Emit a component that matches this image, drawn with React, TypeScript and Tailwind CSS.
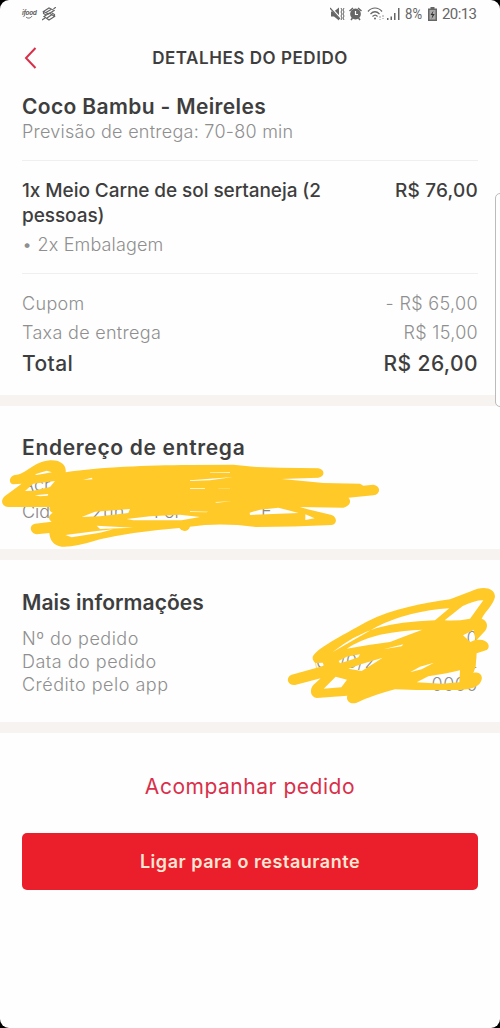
import type { ReactNode } from "react";

const rows = [
  { label: "Nº do pedido", value: "0" },
  {
    label: "Data do pedido",
    value: (
      <span className="flex w-[162px] justify-between">
        <span>00/0/2</span>
        <span>2</span>
      </span>
    ),
  },
  { label: "Crédito pelo app", value: "0000" },
];

function StatusBar() {
  return (
    <div className="flex h-7 items-center justify-between pl-[22px] pr-[23px] text-[#666]">
      <div className="flex items-center gap-[6px]">
        <div className="relative h-4 w-[14px] text-[6.5px] font-bold italic leading-[14px] tracking-[-0.35px]">
          ifood
          <svg className="absolute left-[3px] top-[9px]" width="9" height="5" viewBox="0 0 9 5" fill="none" stroke="currentColor">
            <path d="M1 2c2 2 5 1 6-1" />
          </svg>
        </div>
        <svg width="14" height="14" viewBox="0 0 14 14" fill="none" stroke="currentColor" strokeWidth="1.2">
          <path d="M1.500 4.500 7 1l5 2.500L6.500 7zM2 9.500 7.500 6l5 3.500L7 13z" />
          <path d="M0 13l3-2M14 0l-2.500 2M4 5.500 9 2.500M5 11l5-3.500M1.500 4.500v2L4 8M12.500 9.500v-2L10 6" />
        </svg>
      </div>
      <div className="flex items-center">
        <svg width="16" height="14" viewBox="0 0 16 14" fill="currentColor">
          <path d="M1 4.500h3l5-4v13l-5-4H1z" />
          <path d="M1 1l10 11" stroke="white" strokeWidth="2" />
          <path d="M0 1l10 11" stroke="currentColor" strokeWidth="1.2" />
          <path d="M11 1l1 2-1 2 1 2-1 2 1 2-1 2M14 1l-1 2 1 2-1 2 1 2-1 2 1 2" fill="none" stroke="currentColor" />
        </svg>
        <svg className="ml-[3px]" width="13" height="14" viewBox="0 0 13 14">
          <circle cx="6.500" cy="7" r="5.400" fill="currentColor" />
          <path d="M.500 4 4 1M12.500 4 9 1M2 13l1.500-2M11 13l-1.500-2" stroke="currentColor" strokeWidth="1.500" />
          <path d="M6.500 4v3.500H9" fill="none" stroke="white" strokeWidth="1.200" />
        </svg>
        <svg className="ml-[5px]" width="19" height="14" viewBox="0 0 19 14" fill="none" stroke="currentColor" strokeWidth="1.2">
          <path d="M1 4.500C5-.2 11-.2 15 4.500M3.500 7c3-3 6-3 9 0M5.500 9.500c2-1.800 3.500-1.800 5 0" />
          <circle cx="8" cy="11.500" r="1" fill="currentColor" stroke="none" />
          <path d="M13 9v4M16 8v4" stroke="#aaa" strokeDasharray="2 1" />
        </svg>
        <svg className="ml-px" width="14" height="14" viewBox="0 0 14 14" fill="currentColor">
          <path d="M0 11h1.500v2H0zM3.500 9.500H5V13H3.500zM7 6h1.500v7H7zM11 1h1.500v12H11z" />
        </svg>
        <span className="ml-1 inline-block w-[18px] font-['Roboto'] text-[15px] leading-none">
          <span className="inline-block origin-left scale-x-[0.88]">8%</span>
        </span>
        <svg className="ml-[5px]" width="9" height="14" viewBox="0 0 9 14">
          <path d="M2.500 0h4v1.500H9V14H0V1.500h2.500z" fill="currentColor" />
          <path d="M1.500 3h6v9.500h-6z" fill="#aaa" />
          <path d="M5.500 3.500 2.500 8h2l-1 4 3.200-5H4.500z" fill="#333" />
        </svg>
        <span className="ml-[5px] w-[35px] whitespace-nowrap font-['Roboto'] text-[15px] leading-none tracking-[-0.6px]">
          20:13
        </span>
      </div>
    </div>
  );
}

function Band() {
  return <div className="h-[11px] bg-[#f7f3f1]" />;
}

function Line({ label, value, className }: { label: ReactNode; value: ReactNode; className: string }) {
  return (
    <div className={`flex justify-between whitespace-nowrap ${className}`}>
      <span>{label}</span>
      <span>{value}</span>
    </div>
  );
}

function AddressScribble() {
  return (
    <svg className="absolute left-0 top-[25px] h-[130px] w-[400px]" viewBox="0 0 1200 390" fill="#ffc928" aria-hidden>
      <path
        fillRule="evenodd"
        d="M45 132C80 130 100 92 150 88C185 86 200 105 197 124C300 108 440 103 570 102L700 101L770 108L840 110L955 112C975 115 976 137 955 140L845 144Q910 150 970 156L1080 158L1090 164L1120 161C1143 164 1143 190 1120 193L1045 200C1057 211 1047 228 1030 230L900 228L920 234L995 252C1014 260 1010 280 995 282Q880 288 770 288Q660 274 570 287Q565 300 553 300Q543 299 538 291Q400 302 300 325Q220 350 185 347C160 343 150 328 148 306L110 310C90 308 85 282 105 278L155 272Q137 260 158 245Q145 240 149 228L25 228C5 226 0 208 15 195L65 158L40 160Q28 158 30 145Q33 134 45 132Z
          M75 180L100 158L165 150L150 168L100 179Z M104 193L145 189L143 194L120 196Z M105 130L140 119L156 124L110 132Z
          M245 258L285 242L390 234L385 246L300 256Z M290 284L400 290L300 294Z
          M196 312L290 300L340 295L300 305L215 319Z
          M380 264L450 256L540 251L600 258L545 268L400 268Z
          M630 124L690 124L690 126L630 125Z M570 148L700 138L630 148L570 150Z M570 171L615 171L615 173L570 173Z M655 171L690 171L690 172L655 172Z
          M645 213L695 211L650 215Z M570 241L625 242L620 244L570 243Z
          M749 245L780 236L835 230L896 246L750 252Z M916 250L944 262L916 267Z M249 147L275 140L278 145Z"
      />
    </svg>
  );
}

function InfoScribble() {
  return (
    <svg className="absolute left-[280px] top-[20px] h-[130px] w-[220px]" viewBox="0 0 660 390" fill="#ffc928" aria-hidden>
      <path
        fillRule="evenodd"
        d="M98 230C110 205 180 170 260 125C340 85 430 70 510 58L575 33C610 15 645 25 645 50C640 75 617 92 605 116C625 122 626 145 610 158L590 180C622 174 635 200 620 210L590 220L587 260L580 279C600 273 611 290 603 304C595 323 570 328 540 330L410 330L345 328Q280 345 230 368C210 375 197 360 202 347L110 354C88 350 90 325 100 315L122 295L45 315C20 316 17 290 35 284L108 264L106 249Q97 242 98 230Z
          M157 217Q220 180 290 140Q390 92 508 85L465 121Q360 125 290 144Q220 166 157 217Z
          M200 206Q240 179 300 164Q370 150 427 149Q365 172 330 186Q260 195 200 206Z
          M494 121L548 78Q590 59 610 61L570 116Q530 124 494 121Z
          M108 249L128 248L132 257L110 263Z
          M176 243L200 230L240 223L235 232L205 242L180 250Z
          M205 266L245 252L308 233L280 251L245 273Z
          M131 326L167 290L201 299L184 322Z M390 277L420 260L462 248L425 268Z
          M410 307L445 289L500 280L540 271L538 307L485 311Z
          M549 166L581 150L587 179L571 186Z M310 208L370 193L365 199Z"
      />
    </svg>
  );
}

export default function App() {
  return (
    <div className="bg-black">
      <main className="relative h-[1028px] w-[500px] overflow-hidden rounded-[9px] bg-[#fefefe] font-['Inter',sans-serif] text-[#3e3e3e]">
        <StatusBar />
        <header className="relative flex h-[60px] items-center justify-center">
          <button className="absolute left-[24px] top-[19px]" aria-label="Voltar">
            <svg width="13" height="22" viewBox="0 0 13 22" fill="none" stroke="#d9304a" strokeWidth="2">
              <path d="M11.500 1 2 11l9.500 10" />
            </svg>
          </button>
          <h1 className="text-[17px] font-semibold leading-6 tracking-[0.55px]">DETALHES DO PEDIDO</h1>
        </header>

        <section className="h-[307px] px-[22px] pt-[5px]">
          <h2 className="h-[26px] whitespace-nowrap text-[21px] font-semibold leading-[27px] tracking-[0.35px]">
            Coco Bambu - Meireles
          </h2>
          <p className="h-[25px] text-[18px] font-light leading-[25px] tracking-[0.26px] text-[#8f8f8f]">
            Previsão de entrega: 70-80 min
          </p>
          <div className="mt-4 border-t border-[#efefef] pt-[17px]">
            <div className="flex justify-between text-[19px] font-medium leading-[25px]">
              <p className="w-[320px] tracking-[-0.07px]">
                1x Meio Carne de sol sertaneja (2
                <br />
                pessoas)
              </p>
              <span className="tracking-[0.2px]">R$ 76,00</span>
            </div>
            <p className="mt-1 text-[18px] font-light leading-[25px] tracking-[0.16px] text-[#8f8f8f]">• 2x Embalagem</p>
          </div>
          <div className="mt-4 border-t border-[#efefef] pt-[15px]">
            <Line className="text-[18px] font-light leading-[29px] tracking-[0.35px] text-[#8f8f8f]" label="Cupom" value="- R$ 65,00" />
            <Line className="text-[18px] font-light leading-[29px] tracking-[0.3px] text-[#8f8f8f]" label="Taxa de entrega" value="R$ 15,00" />
            <Line className="text-[21px] font-medium leading-[34px] tracking-[0.4px]" label="Total" value="R$ 26,00" />
          </div>
        </section>
        <Band />

        <section className="relative h-[143px] px-[22px] pt-[28px]">
          <h2 className="text-[21px] font-semibold leading-[28px] tracking-[0.67px]">Endereço de entrega</h2>
          <div className="mt-[9px] text-[18px] font-light leading-[27px] text-[#888]">
            <p>Acr</p>
            <div className="flex">
              <span className="w-[70px]">Cid</span>
              <span className="w-[62px]">2un</span>
              <span className="w-[87px]">For</span>
              <span className="pl-5">E</span>
            </div>
          </div>
          <AddressScribble />
        </section>
        <Band />

        <section className="relative h-[162px] px-[22px] pt-[28px]">
          <h2 className="text-[21px] font-semibold leading-[29px] tracking-[0.05px]">Mais informações</h2>
          <div className="mt-[10px]">
            {rows.map((r) => (
              <Line
                key={r.label}
                className="text-[18px] font-light leading-[23px] tracking-[0.5px] text-[#8f8f8f]"
                label={r.label}
                value={r.value}
              />
            ))}
          </div>
          <InfoScribble />
        </section>
        <Band />

        <div className="px-[22px] pt-[39px]">
          <button className="block w-full text-center text-[21px] leading-[30px] tracking-[0.53px] text-[#d9304a]">
            Acompanhar pedido
          </button>
          <button className="mt-[31px] block h-[57px] w-full rounded-[5px] bg-[#eb1e2c] text-center text-[18px] font-semibold tracking-[0.53px] text-[#ffe6d5]">
            Ligar para o restaurante
          </button>
        </div>

        {/* edge panel handle */}
        <div className="absolute left-[495px] top-[193px] h-[214px] w-3 rounded-l-[5px] border border-[#bbb] bg-[#fefefe]" />
      </main>
    </div>
  );
}
